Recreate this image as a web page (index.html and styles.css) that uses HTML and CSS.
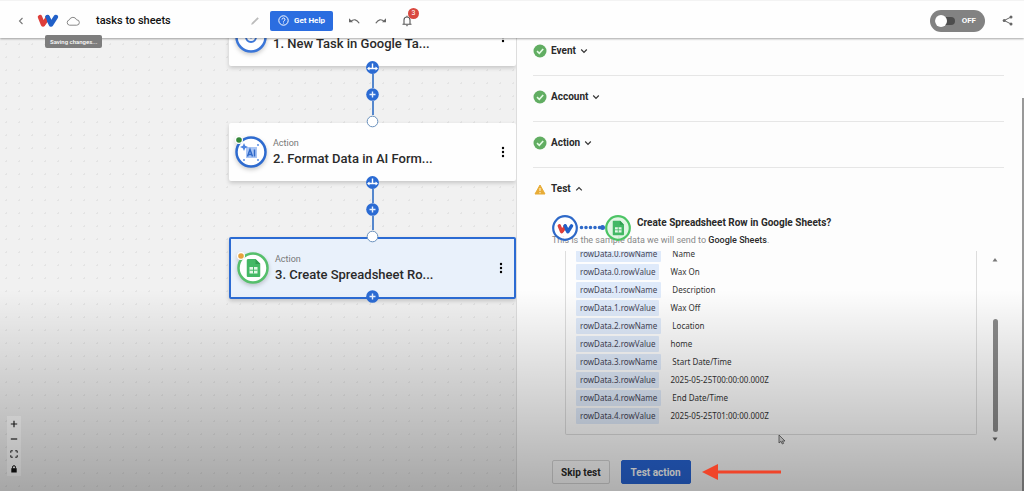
FILE: index.html
```html
<!DOCTYPE html>
<html lang="en">
<head>
<meta charset="utf-8">
<title>tasks to sheets</title>
<link rel="stylesheet" href="styles.css">
</head>
<body>
<svg class="defs" aria-hidden="true">
  <symbol id="logo" viewBox="0 0 22 14">
    <path d="M3 3 6 10.500 10 5" stroke="#de3f3b" stroke-width="4.500" fill="none" stroke-linecap="round" stroke-linejoin="round"/>
    <path d="M10.500 3 14 10.500 18.800 3" stroke="#2160c8" stroke-width="4.500" fill="none" stroke-linecap="round" stroke-linejoin="round"/>
    <path d="M6.500 10.500 10.500 3" stroke="#de3f3b" stroke-width="3" fill="none" stroke-linecap="round"/>
    <path d="M10.500 3 13 8.500" stroke="#2160c8" stroke-width="4" fill="none" stroke-linecap="round"/>
  </symbol>
  <symbol id="sheet" viewBox="0 0 14 18">
    <path d="M1.500 0H9l5 5v11.500a1.500 1.500 0 0 1-1.500 1.500h-11A1.500 1.500 0 0 1 0 16.500v-15A1.500 1.500 0 0 1 1.500 0z" fill="#43b865"/>
    <path d="M9 0l5 5H9z" fill="#2f9c50"/>
    <path d="M3 8h8v6.500H3z" fill="#e4f6e8"/>
    <path d="M3 11.200h8M7 8v6.500" stroke="#43b865" stroke-width="1"/>
  </symbol>
  <symbol id="check" viewBox="0 0 14 14">
    <circle cx="7" cy="7" r="6.500" fill="#61ad62"/>
    <path d="M4 7.200 6.300 9.300 10.200 5" stroke="#e4fbe4" stroke-width="1.600" fill="none"/>
  </symbol>
  <symbol id="down" viewBox="0 0 8 6"><path d="M1.200 1.500 4 4.300 6.800 1.500" stroke="#333" stroke-width="1.200" fill="none"/></symbol>
  <symbol id="plus" viewBox="0 0 13 13">
    <circle cx="6.500" cy="6.500" r="6.300" fill="#2b6bd3"/>
    <path d="M6.500 3.500v6M3.500 6.500h6" stroke="#e8f1ff" stroke-width="1.400"/>
  </symbol>
  <symbol id="branch" viewBox="0 0 13 13">
    <circle cx="6.500" cy="6.500" r="6.400" fill="#2b6bd3"/>
    <path d="M6.500 2.500v5M2 7.500h9" stroke="#fff" stroke-width="1.400"/>
    <path d="M1 7.500 3.500 5.500v4zM12 7.500 9.500 5.500v4z" fill="#fff"/>
  </symbol>
  <symbol id="port" viewBox="0 0 13 13"><circle cx="6.500" cy="6.500" r="5.300" fill="#fff" stroke="#6a91bd" stroke-width="1"/></symbol>
  <symbol id="dots" viewBox="0 0 4 12"><circle cx="2" cy="2" r="1.200"/><circle cx="2" cy="6" r="1.200"/><circle cx="2" cy="10" r="1.200"/></symbol>
</svg>

<header class="topbar">
  <div class="brand">
    <button class="icon-btn" aria-label="Back"><svg width="8" height="10" viewBox="0 0 8 10"><path d="M5.500 2 2.500 5l3 3" stroke="#777" stroke-width="1.100" fill="none"/></svg></button>
    <svg class="logo" width="22" height="14"><use href="#logo"/></svg>
    <div class="save-state">
      <svg width="14" height="10" viewBox="0 0 14 10"><path d="M3.500 9.200a2.700 2.700 0 0 1-.2-5.300A3.900 3.900 0 0 1 10.600 3.800 2.700 2.700 0 0 1 10.700 9.200z" stroke="#888" fill="none"/></svg>
      <span class="tooltip" role="status">Saving changes...</span>
    </div>
  </div>
  <h1 class="flow-name">tasks to sheets</h1>
  <div class="tools">
    <button class="icon-btn" aria-label="Rename"><svg width="10" height="10" viewBox="0 0 10 10"><path d="M1.200 8.800 1.700 7 7.500 1.300 8.800 2.500 3 8.300z" fill="#bbb"/></svg></button>
    <button class="help-btn"><svg width="11" height="11" viewBox="0 0 11 11"><circle cx="5.500" cy="5.500" r="4.700" stroke="#fff" fill="none"/><path d="M4 4.500a1.500 1.500 0 1 1 2.200 1.300q-.7.300-.7 1M5.500 7.500v1" stroke="#fff" stroke-width=".9" fill="none"/></svg>Get Help</button>
    <button class="icon-btn undo" aria-label="Undo"><svg width="12" height="8" viewBox="0 0 12 8"><path d="M1 1.200v4h4z" fill="#666"/><path d="M2.500 4.600Q7.500.2 11.200 6.300" stroke="#666" stroke-width="1.200" fill="none"/></svg></button>
    <button class="icon-btn" aria-label="Redo"><svg width="12" height="8" viewBox="0 0 12 8"><path d="M11 1.200v4H7z" fill="#666"/><path d="M9.500 4.600Q4.500.2.800 6.300" stroke="#666" stroke-width="1.200" fill="none"/></svg></button>
    <button class="icon-btn bell" aria-label="Notifications"><svg width="10" height="12" viewBox="0 0 10 12"><path d="M.5 9.300h9M2 9V5a3 3 0 0 1 6 0v4M5 2V.8" stroke="#555" stroke-width="1.100" fill="none"/><path d="M3.800 10.200h2.400L5 11.500z" fill="#555"/></svg><span class="count">3</span></button>
  </div>
  <label class="toggle"><input type="checkbox" class="toggle-input"><span class="track"></span><span>OFF</span></label>
  <button class="icon-btn" aria-label="Share"><svg width="11" height="11" viewBox="0 0 11 11"><path d="M9 2 2.200 5.500 9 9" stroke="#666" fill="none"/><g fill="#666"><circle cx="9" cy="2" r="1.500"/><circle cx="2.200" cy="5.500" r="1.500"/><circle cx="9" cy="9" r="1.500"/></g></svg></button>
</header>

<main class="workspace">
  <section class="canvas" aria-label="Workflow">
    <article class="node node-first">
      <svg class="app-icon" width="34" height="34" viewBox="0 0 34 34"><circle cx="17" cy="17" r="14.500" fill="#fff" stroke="#3b76d8" stroke-width="2.500"/><circle cx="17" cy="17" r="5" fill="none" stroke="#3b76d8" stroke-width="2"/><circle cx="17" cy="17" r="1.500" fill="#3b76d8"/></svg>
      <div class="node-text"><h2 class="node-title">1. New Task in Google Ta...</h2></div>
      <button class="icon-btn" aria-label="More options for step 1"><svg width="4" height="12"><use href="#dots"/></svg></button>
    </article>
    <article class="node node-second">
      <svg class="app-icon" width="34" height="34" viewBox="0 0 34 34"><circle cx="17" cy="17" r="14.500" fill="#fff" stroke="#2e6bcf" stroke-width="2.500"/><path d="M12 12h11v11H12z" fill="#a9c5f4"/><path d="M10 8l1.200 2.800L14 12l-2.800 1.200L10 16l-1.200-2.800L6 12l2.800-1.200z" fill="#4c84df"/><path d="M13.500 21.500 16 14.500l2.500 7M14.500 19.500h3M20.500 14.500v7" stroke="#2f69c9" stroke-width="1.500" fill="none"/><g fill="#4c84df"><circle cx="24" cy="10" r=".9"/><circle cx="10" cy="25" r=".9"/><circle cx="24" cy="25" r=".9"/></g><circle cx="5" cy="5" r="4" fill="#fff"/><circle cx="5" cy="5" r="2.800" fill="#35873a"/></svg>
      <div class="node-text"><span class="kind">Action</span><h2 class="node-title">2. Format Data in AI Form...</h2></div>
      <button class="icon-btn" aria-label="More options for step 2"><svg width="4" height="12"><use href="#dots"/></svg></button>
    </article>
    <article class="node node-third selected">
      <svg class="app-icon" width="34" height="34" viewBox="0 0 34 34"><circle cx="17" cy="17" r="14.500" fill="#fff" stroke="#55bf6b" stroke-width="2.500"/><use href="#sheet" x="10.500" y="8" width="14" height="18"/><circle cx="5" cy="5" r="4" fill="#fff"/><circle cx="5" cy="5" r="2.800" fill="#e6a23c"/></svg>
      <div class="node-text"><span class="kind">Action</span><h2 class="node-title">3. Create Spreadsheet Ro...</h2></div>
      <button class="icon-btn" aria-label="More options for step 3"><svg width="4" height="12"><use href="#dots"/></svg></button>
    </article>
    <div class="connector connector-one">
      <button class="icon-btn" aria-label="Add branch"><svg width="13" height="13"><use href="#branch"/></svg></button><i class="wire"></i>
      <button class="icon-btn" aria-label="Add step"><svg width="13" height="13"><use href="#plus"/></svg></button><i class="wire"></i>
      <svg width="13" height="13"><use href="#port"/></svg>
    </div>
    <div class="connector connector-two">
      <button class="icon-btn" aria-label="Add branch"><svg width="13" height="13"><use href="#branch"/></svg></button><i class="wire"></i>
      <button class="icon-btn" aria-label="Add step"><svg width="13" height="13"><use href="#plus"/></svg></button><i class="wire"></i>
      <svg width="13" height="13"><use href="#port"/></svg>
    </div>
    <div class="connector connector-end">
      <button class="icon-btn" aria-label="Add step"><svg width="13" height="13"><use href="#plus"/></svg></button>
    </div>
    <div class="zoom-controls">
      <button class="zoom-btn" aria-label="Zoom in"><svg width="8" height="8" viewBox="0 0 8 8"><path d="M4 .8v6.400M.8 4h6.400" stroke="#222" stroke-width="1.200"/></svg></button>
      <button class="zoom-btn" aria-label="Zoom out"><svg width="8" height="8" viewBox="0 0 8 8"><path d="M.8 4h6.400" stroke="#222" stroke-width="1.200"/></svg></button>
      <button class="zoom-btn" aria-label="Fit view"><svg width="8" height="8" viewBox="0 0 8 8"><path d="M.8 2.800v-2h2M5.200.8h2v2M7.200 5.200v2h-2M2.800 7.200h-2v-2" stroke="#222" fill="none"/></svg></button>
      <button class="zoom-btn" aria-label="Lock"><svg width="8" height="8" viewBox="0 0 8 8"><path d="M1.300 3.200h5.400v4.300H1.300z" fill="#111"/><path d="M2.500 3.500V2.200a1.500 1.500 0 0 1 3 0v1.300" stroke="#111" fill="none"/></svg></button>
    </div>
  </section>

  <section class="panel" aria-label="Step settings">
    <div class="stages">
      <div class="stage"><svg width="14" height="14"><use href="#check"/></svg><button class="stage-btn">Event <svg width="8" height="6"><use href="#down"/></svg></button></div>
      <div class="stage"><svg width="14" height="14"><use href="#check"/></svg><button class="stage-btn">Account <svg width="8" height="6"><use href="#down"/></svg></button></div>
      <div class="stage"><svg width="14" height="14"><use href="#check"/></svg><button class="stage-btn">Action <svg width="8" height="6"><use href="#down"/></svg></button></div>
      <div class="stage"><svg width="14" height="14" viewBox="0 0 14 14"><path d="M7 3 12 12H2z" fill="#e8ac36" stroke="#e8ac36" stroke-linejoin="round"/><path d="M7 6v3M7 10v1.200" stroke="#fff3d6" stroke-width="1.100"/></svg><button class="stage-btn">Test <svg width="8" height="6" viewBox="0 0 8 6"><path d="M1.200 4.300 4 1.500 6.800 4.300" stroke="#333" stroke-width="1.200" fill="none"/></svg></button></div>
    </div>

    <div class="test-body">
      <div class="summary">
        <svg class="pair" width="79" height="26" viewBox="0 0 79 26"><circle cx="13" cy="13" r="11.800" fill="#fff" fill-opacity=".7" stroke="#2e69c8" stroke-width="2.200"/><use href="#logo" x="5" y="8.500" width="17" height="11"/><path d="M29.500 12.500h18.500" stroke="#2e69c8" stroke-width="3.600" stroke-linecap="round" stroke-dasharray="0 4.500"/><circle cx="50.500" cy="12.500" r="2.500" fill="#2e69c8"/><circle cx="66" cy="13" r="11.800" fill="#d9f4dd" fill-opacity=".8" stroke="#4cc465" stroke-width="2.200"/><use href="#sheet" x="60.500" y="5.500" width="11.500" height="15"/></svg>
        <h3 class="summary-title">Create Spreadsheet Row in Google Sheets?</h3>
      </div>
      <p class="hint">This is the sample data we will send to <strong>Google Sheets</strong>.</p>
      <div class="data-scroll">
        <dl class="data">
          <div class="pair-row"><dt>rowData.0.rowName</dt><dd>Name</dd></div>
          <div class="pair-row"><dt>rowData.0.rowValue</dt><dd>Wax On</dd></div>
          <div class="pair-row"><dt>rowData.1.rowName</dt><dd>Description</dd></div>
          <div class="pair-row"><dt>rowData.1.rowValue</dt><dd>Wax Off</dd></div>
          <div class="pair-row"><dt>rowData.2.rowName</dt><dd>Location</dd></div>
          <div class="pair-row"><dt>rowData.2.rowValue</dt><dd>home</dd></div>
          <div class="pair-row"><dt>rowData.3.rowName</dt><dd>Start Date/Time</dd></div>
          <div class="pair-row"><dt>rowData.3.rowValue</dt><dd>2025-05-25T00:00:00.000Z</dd></div>
          <div class="pair-row"><dt>rowData.4.rowName</dt><dd>End Date/Time</dd></div>
          <div class="pair-row"><dt>rowData.4.rowValue</dt><dd>2025-05-25T01:00:00.000Z</dd></div>
        </dl>
        <div class="scrollbar" aria-hidden="true">
          <svg width="6" height="4" viewBox="0 0 6 4"><path d="M3 0 5.500 3.500h-5z" fill="#777"/></svg>
          <span class="thumb"></span>
          <svg width="6" height="4" viewBox="0 0 6 4"><path d="M3 4 5.500.5h-5z" fill="#666"/></svg>
        </div>
      </div>
      <div class="actions">
        <button class="btn">Skip test</button>
        <button class="btn btn-primary">Test action</button>
        <svg class="arrow" width="80" height="16" viewBox="0 0 80 16"><path d="M14 8h65" stroke="#f0452a" stroke-width="3"/><path d="M0 8 16 0v16z" fill="#f0452a"/></svg>
      </div>
    </div>
    <span class="page-thumb" aria-hidden="true"></span>
    <svg class="cursor" width="8" height="11" viewBox="0 0 8 11" aria-hidden="true"><path d="M1 1v8l2-1.700L4.300 10l1.300-.6L4.500 7H7z" fill="#ddd" stroke="#555" stroke-width=".8"/></svg>
  </section>
</main>
<div class="shade" aria-hidden="true"></div>
</body>
</html>
```
FILE: styles.css
```css
* { box-sizing: border-box; }
body {
  margin: 0;
  height: 100vh;
  overflow: hidden;
  display: flex;
  flex-direction: column;
  font-family: Roboto, "Liberation Sans", sans-serif;
  color: #2a2a2a;
  background: #fdfdfd;
}
h1, h2, h3, p, dl, dd { margin: 0; }
button { font: inherit; color: inherit; cursor: pointer; }
svg { display: block; flex: none; }
.defs { position: absolute; width: 0; height: 0; }
.icon-btn { display: block; padding: 0; border: 0; background: none; }

.topbar {
  position: relative;
  z-index: 2;
  display: flex;
  align-items: center;
  height: 38px;
  padding: 2px 11px 0 17px;
  background: #fefefe;
  border-top: 1px solid #f3f3f3;
  box-shadow: 0 1px 2px rgba(0, 0, 0, .35);
}
.brand { display: flex; align-items: center; gap: 7px; }
.logo { margin-left: 5px; }
.save-state { position: relative; }
.tooltip {
  position: absolute;
  top: 19px;
  left: -21px;
  padding: 0 5px;
  border-radius: 2px;
  background: #7d7d7d;
  color: #fff;
  font-size: 6px;
  font-weight: 500;
  line-height: 13px;
  white-space: nowrap;
}
.flow-name {
  width: 154px;
  margin-left: 16px;
  font-size: 11px;
  font-weight: 500;
  line-height: 16px;
  color: #111;
}
.tools { display: flex; align-items: center; flex: 1; }
.help-btn {
  display: flex;
  align-items: center;
  gap: 5px;
  height: 20px;
  margin: 0 15px 0 10px;
  padding: 0 8px;
  border: 0;
  border-radius: 2px;
  background: #2b6de0;
  color: #fff;
  font-size: 8px;
  font-weight: 700;
  white-space: nowrap;
}
.undo { margin-right: 15px; }
.bell { position: relative; margin-left: 15px; }
.count {
  position: absolute;
  top: -7px;
  left: 6px;
  width: 11px;
  border-radius: 50%;
  background: #d9483f;
  color: #fff;
  font-size: 7px;
  line-height: 11px;
  text-align: center;
}
.toggle {
  display: flex;
  align-items: center;
  gap: 7px;
  height: 22px;
  margin-right: 17px;
  padding: 0 9px 0 5px;
  border-radius: 11px;
  background: #828282;
  color: #fff;
  font-size: 8px;
  font-weight: 700;
}
.toggle-input { position: absolute; opacity: 0; }
.track {
  position: relative;
  width: 20px;
  height: 8px;
  border-radius: 4px;
  background: #4d4d4d;
}
.track::before {
  content: "";
  position: absolute;
  top: -2px;
  left: 0;
  width: 12px;
  height: 12px;
  border-radius: 50%;
  background: #fff;
}

.workspace {
  flex: 1;
  min-height: 0;
  display: grid;
  grid-template-columns: 516fr 508fr;
}
.canvas {
  position: relative;
  overflow: hidden;
  background: #f1f1f1 radial-gradient(circle, #e4e4e4 1px, transparent 1px) 0 0 / 13px 13px;
}
.node {
  position: absolute;
  left: 229px;
  right: 0;
  display: flex;
  align-items: center;
  gap: 5px;
  height: 58px;
  padding: 0 11px 0 5px;
  border-radius: 2px;
  background: #fefefe;
  box-shadow: 0 2px 4px rgba(0, 0, 0, .18);
}
.node-first { top: -30px; }
.node-first .node-text { padding-top: 14px; }
.node-second { top: 85px; }
.node-third { top: 199px; }
.selected {
  height: 62px;
  border: 2px solid #2b6bd3;
  background: #e9f1fb;
}
.app-icon { filter: drop-shadow(0 2px 2px rgba(0, 0, 0, .2)); }
.node-text { flex: 1; min-width: 0; }
.kind { display: block; font-size: 9px; line-height: 14px; color: #777; }
.node-title { font-size: 13px; font-weight: 500; line-height: 18px; white-space: nowrap; }
.connector {
  position: absolute;
  left: 366px;
  display: flex;
  flex-direction: column;
  align-items: center;
}
.connector-one { top: 23px; }
.connector-two { top: 138px; }
.connector-end { top: 252px; }
.wire { width: 2px; height: 14px; background: #5587cd; }
.zoom-controls {
  position: absolute;
  left: 7px;
  bottom: 15px;
  display: flex;
  flex-direction: column;
  background: #fefefe;
}
.zoom-btn {
  display: grid;
  place-items: center;
  width: 14px;
  height: 15px;
  padding: 0;
  border: 0;
  background: none;
}

.panel {
  position: relative;
  padding: 5px 20px 0 16px;
  border-left: 1px solid #ddd;
  background: #fdfdfd;
}
.stage {
  display: flex;
  align-items: center;
  gap: 4px;
  padding: 13px 0 16px;
  border-bottom: 1px solid #e6e6e6;
}
.stage:first-child { padding-top: 0; }
.stage:last-child { padding-bottom: 0; border-bottom: 0; }
.stage-btn {
  display: flex;
  align-items: center;
  gap: 4px;
  padding: 0;
  border: 0;
  background: none;
  font-size: 10px;
  font-weight: 700;
  line-height: 16px;
}
.test-body { padding: 18px 6px 0 19px; }
.summary { position: relative; display: flex; gap: 6px; height: 18px; }
.pair { position: relative; z-index: 1; }
.summary-title { font-size: 10px; font-weight: 700; line-height: 16px; white-space: nowrap; }
.hint { font-size: 9px; line-height: 14px; color: #888; white-space: nowrap; }
.hint strong { font-weight: 500; color: #2a2a2a; }
.data-scroll {
  display: flex;
  justify-content: space-between;
  height: 190px;
  margin-top: 4px;
  padding-left: 13px;
}
.data {
  flex: 1;
  display: flex;
  flex-direction: column;
  justify-content: flex-end;
  height: 184px;
  margin-right: 15px;
  padding: 0 10px 8px;
  border: solid #ddd;
  border-width: 0 1px 1px;
  border-radius: 0 0 2px 2px;
  overflow: hidden;
  font-family: "Noto Sans", "Open Sans", sans-serif;
  font-size: 8px;
  line-height: 16px;
}
.pair-row { display: flex; gap: 11px; flex: none; height: 18px; color: #333; }
.pair-row dt { height: 16px; padding: 0 4px; background: #dfeafa; color: #445; border-radius: 1px; }
.scrollbar { display: flex; flex-direction: column; align-items: center; padding-top: 7px; }
.thumb {
  width: 5px;
  height: 113px;
  margin: auto 0 5px;
  border-radius: 3px;
  background: #8b8b8b;
}
.actions { display: flex; align-items: center; gap: 11px; margin-top: 19px; }
.btn {
  height: 24px;
  padding: 0 8px;
  border: 1px solid #d8d8d8;
  border-radius: 2px;
  background: #fefefe;
  font-size: 10px;
  font-weight: 700;
  white-space: nowrap;
}
.btn-primary { padding: 0 9px; border-color: #2866d8; background: #2866d8; color: #fff; }
.arrow { position: relative; z-index: 4; }
.page-thumb { position: absolute; top: 60px; right: 0; bottom: 0; width: 2px; background: #999; }
.cursor { position: absolute; top: 396px; left: 261px; }

.shade {
  position: absolute;
  inset: 59% 0 0;
  z-index: 3;
  background: linear-gradient(rgba(0, 0, 0, 0), rgba(0, 0, 0, .31));
  pointer-events: none;
}
```
